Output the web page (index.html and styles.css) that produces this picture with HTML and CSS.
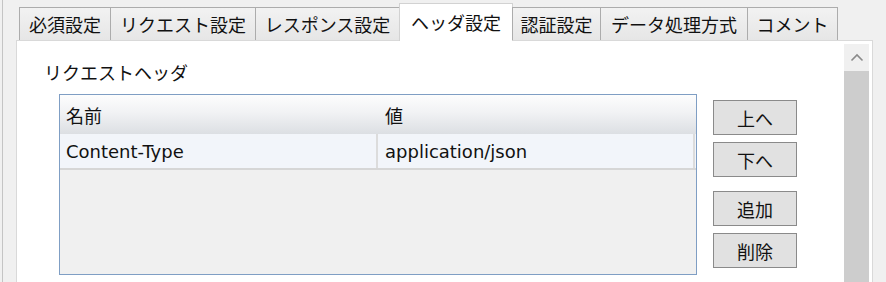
FILE: index.html
```html
<!DOCTYPE html>
<html lang="ja">
<head>
<meta charset="utf-8">
<link rel="stylesheet" href="styles.css">
</head>
<body>
<div class="window">
  <div class="tabs">
    <div class="tab t1">必須設定</div>
    <div class="tab t2">リクエスト設定</div>
    <div class="tab t3">レスポンス設定</div>
    <div class="tab t4 active">ヘッダ設定</div>
    <div class="tab t5">認証設定</div>
    <div class="tab t6">データ処理方式</div>
    <div class="tab t7">コメント</div>
  </div>
  <div class="panel">
    <div class="content">
      <div class="label">リクエストヘッダ</div>
      <div class="row">
        <div class="table">
          <div class="thead">
            <div class="th c1">名前</div>
            <div class="th c2">値</div>
          </div>
          <div class="tr">
            <div class="td c1">Content-Type</div>
            <div class="td c2">application/json</div>
          </div>
        </div>
        <div class="buttons">
          <button class="btn">上へ</button>
          <button class="btn">下へ</button>
          <button class="btn gap">追加</button>
          <button class="btn">削除</button>
        </div>
      </div>
    </div>
    <div class="scrollbar">
      <div class="arrow">
        <svg width="14" height="9" viewBox="0 0 14 9"><path d="M1.5 7.5 L7 2 L12.5 7.5" fill="none" stroke="#8a8a8a" stroke-width="1.6"/></svg>
      </div>
      <div class="thumb"></div>
    </div>
  </div>
</div>
</body>
</html>
```
FILE: styles.css
```css
html, body {
  margin: 0;
  padding: 0;
}
body {
  width: 886px;
  height: 282px;
  overflow: hidden;
  background: #f0f0f0;
  font-family: "Noto Sans CJK JP", "Noto Sans", sans-serif;
  font-size: 18px;
  color: #111111;
}
.window {
  height: 282px;
  padding: 3px 0 0 13px;
  box-sizing: border-box;
  border-left: 1px solid #c4c4c4;
  margin-left: 2px;
}
.tabs {
  display: flex;
  align-items: flex-end;
  height: 37px;
  padding-left: 3px;
  position: relative;
  z-index: 2;
}
.tab {
  height: 33px;
  box-sizing: border-box;
  border: 1px solid #acacac;
  border-bottom: none;
  background: linear-gradient(#f2f2f2, #e6e6e6);
  margin-left: -1px;
  display: flex;
  align-items: center;
  justify-content: center;
  line-height: 1;
  white-space: nowrap;
}
.tab:first-child { margin-left: 0; }
.t1 { width: 92px; }
.t2 { width: 146px; }
.t3 { width: 145px; }
.t4 { width: 114px; }
.t5 { width: 89px; }
.t6 { width: 148px; }
.t7 { width: 91px; }
.tab.active {
  height: 38px;
  margin-bottom: -1px;
  background: #ffffff;
  border-color: #d2d2d2;
  padding-bottom: 2px;
}
.panel {
  width: 857px;
  height: 250px;
  box-sizing: border-box;
  background: #ffffff;
  border: 1px solid #d9d9d9;
  display: flex;
}
.content {
  flex: 1;
}
.label {
  margin: 19px 0 0 27px;
  line-height: 24px;
  height: 24px;
}
.row {
  display: flex;
  margin: 10px 0 0 42px;
}
.table {
  width: 638px;
  height: 181px;
  box-sizing: border-box;
  border: 1px solid #7f9ec4;
  background: #f0f0f0;
}
.thead {
  display: flex;
  height: 39px;
  background: linear-gradient(#fdfdfd, #f1f2f4 45%, #dcdfe3);
}
.th, .td {
  display: flex;
  align-items: center;
  padding-left: 6px;
  box-sizing: border-box;
  white-space: nowrap;
}
.td {
  font-family: "DejaVu Sans", "Noto Sans CJK JP", sans-serif;
  font-size: 18px;
}
.c1 { width: 318px; }
.c2 { width: 317px; padding-left: 7px; }
.tr {
  display: flex;
  height: 36px;
  background: #f2f5fa;
  border-bottom: 2px solid #d6d6d6;
  width: 636px;
  box-sizing: border-box;
}
.td.c1 { border-right: 2px solid #dcdcdc; }
.td.c2 { border-right: 2px solid #dcdcdc; }
.buttons {
  display: flex;
  flex-direction: column;
  margin: 6px 0 0 16px;
  gap: 7px;
}
.btn {
  width: 84px;
  height: 35px;
  box-sizing: border-box;
  border: 1px solid #8a8a8a;
  background: #e1e1e1;
  font-family: inherit;
  font-size: 18px;
  color: #111111;
  padding: 0;
  margin: 0;
  line-height: 1;
}
.btn.gap { margin-top: 7px; }
.scrollbar {
  width: 25px;
  margin: 3px 3px 0 0;
  display: flex;
  flex-direction: column;
  background: #f0f0f0;
}
.arrow {
  height: 27px;
  display: flex;
  align-items: center;
  justify-content: center;
}
.thumb {
  flex: 1;
  background: #cdcdcd;
}
```
